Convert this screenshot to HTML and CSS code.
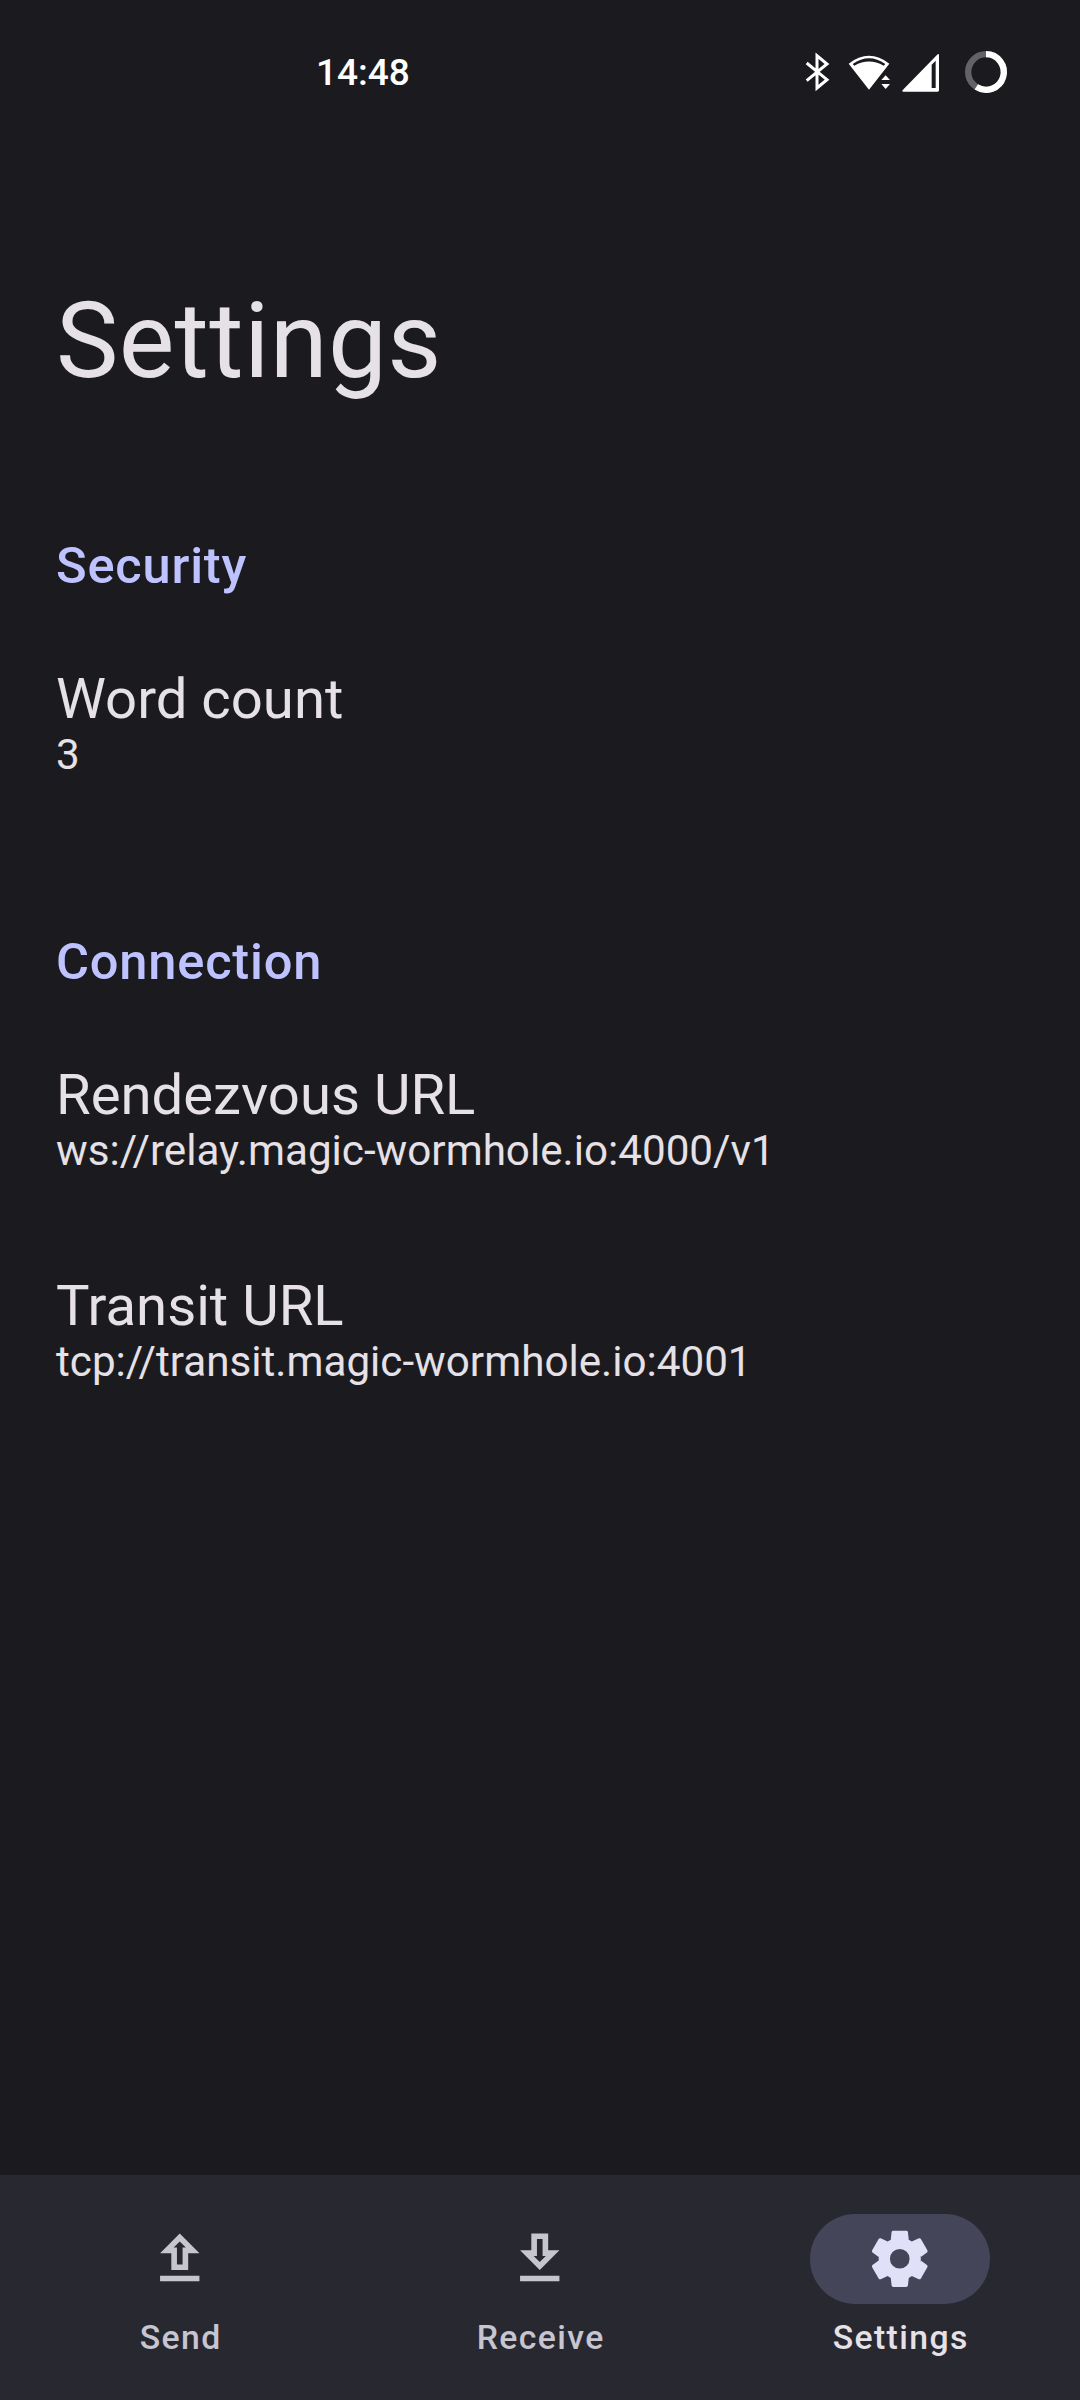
FILE: index.html
```html
<!DOCTYPE html>
<html lang="en">
<head>
<meta charset="utf-8">
<title>Settings</title>
<link rel="stylesheet" href="styles.css">
</head>
<body>
<div class="screen">
  <header class="status">
    <span class="clock">14:48</span>
    <div class="status-icons">
      <svg class="icon-row" viewBox="0 0 750 270" fill="none">
        <path d="M80 99 141 149 111 174V77L141 102 80 152" stroke="#fff" stroke-width="9"/>
        <path d="M267 179 206 101Q267 54 328 101ZM218 102 223 107Q267 82 311 107L316 102Q267 68 218 102Z" fill="#fff" fill-rule="evenodd"/>
        <path d="M304 150 317 136 330 150ZM304 162H330L317 177Z" fill="#fff"/>
        <path d="M370 185Q364 184 369 179L473 73Q477 70 477 76V181Q477 185 473 185ZM455 104V174H467V92Z" fill="#fff" fill-rule="evenodd"/>
        <circle cx="618" cy="126" r="53.5" stroke="#636365" stroke-width="19"/>
        <path d="M618 72.500A53.500 53.500 0 1 1 588.900 170.900" stroke="#fff" stroke-width="19"/>
      </svg>
    </div>
  </header>
  <main class="content">
    <h1 class="title">Settings</h1>
    <section class="group">
      <h2 class="group-title">Security</h2>
      <div class="item"><div class="name">Word count</div><div class="value">3</div></div>
    </section>
    <section class="group">
      <h2 class="group-title">Connection</h2>
      <div class="item"><div class="name">Rendezvous URL</div><div class="value">ws://relay.magic-wormhole.io:4000/v1</div></div>
      <div class="item"><div class="name">Transit URL</div><div class="value">tcp://transit.magic-wormhole.io:4001</div></div>
    </section>
  </main>
  <nav class="nav">
    <a class="tab"><span class="pill"><svg class="icon" viewBox="0 0 24 24"><path d="M9 16h6v-6h4l-7-7-7 7h4v6zm3-10.170L14.170 8H13v6h-2V8H9.830L12 5.830zM5 18h14v2H5z"/></svg></span><span class="label">Send</span></a>
    <a class="tab"><span class="pill"><svg class="icon" viewBox="0 0 24 24"><path d="M19 9h-4V3H9v6H5l7 7 7-7zm-8 2V5h2v6h1.170L12 13.170 9.830 11H11zm-6 7h14v2H5z"/></svg></span><span class="label">Receive</span></a>
    <a class="tab active"><span class="pill"><svg class="icon" viewBox="-12 -12 24 24"><defs><path id="tooth" d="M-3.200-6.800-2.900-9.500Q-2.850-10-2.300-10H2.300Q2.850-10 2.900-9.500L3.200-6.800Z"/></defs><circle r="5.500" fill="none" stroke="currentColor" stroke-width="4"/><use href="#tooth"/><use href="#tooth" transform="rotate(60)"/><use href="#tooth" transform="rotate(120)"/><use href="#tooth" transform="rotate(180)"/><use href="#tooth" transform="rotate(240)"/><use href="#tooth" transform="rotate(300)"/></svg></span><span class="label">Settings</span></a>
  </nav>
</div>
</body>
</html>
```
FILE: styles.css
```css
body { margin: 0; background: #1b1b1f; font-family: Roboto, sans-serif; color: #e5e1e6; }
.screen { width: 1080px; height: 2400px; display: flex; flex-direction: column; }
.status { height: 144px; padding: 0 50px 0 316px; display: flex; justify-content: space-between; box-sizing: border-box; color: #fff; }
.clock { font-size: 37px; font-weight: 500; line-height: 44px; padding-top: 51px; }
.status-icons { padding-top: 30px; }
.icon-row { display: block; width: 250px; height: 90px; }
.content { flex: 1; padding: 138px 56px 0; }
.title { margin: 0; font-size: 105px; font-weight: 400; line-height: 120px; letter-spacing: 0.300px; }
.group + .group { padding-top: 19px; }
.group-title { margin: 0; padding-top: 134px; font-size: 50.600px; font-weight: 500; line-height: 60px; letter-spacing: 0.800px; color: #bec2ff; }
.item { padding-top: 72px; }
.item + .item { padding-top: 100px; }
.name { font-size: 56.250px; line-height: 63px; }
.value { font-size: 42.200px; line-height: 48px; }
.nav { height: 225px; background: #282831; display: flex; }
.tab { flex: 1; display: flex; flex-direction: column; align-items: center; padding-top: 39px; color: #c7c5d0; }
.pill { width: 180px; height: 90px; border-radius: 45px; display: flex; align-items: center; justify-content: center; }
.icon { width: 67.500px; height: 67.500px; fill: currentColor; }
.label { margin-top: 11px; padding-left: 1.400px; font-size: 33.750px; font-weight: 500; line-height: 45px; letter-spacing: 1.400px; }
.active .pill { background: #444559; color: #e1e0f9; }
.active .label { color: #e5e1e6; }
```
